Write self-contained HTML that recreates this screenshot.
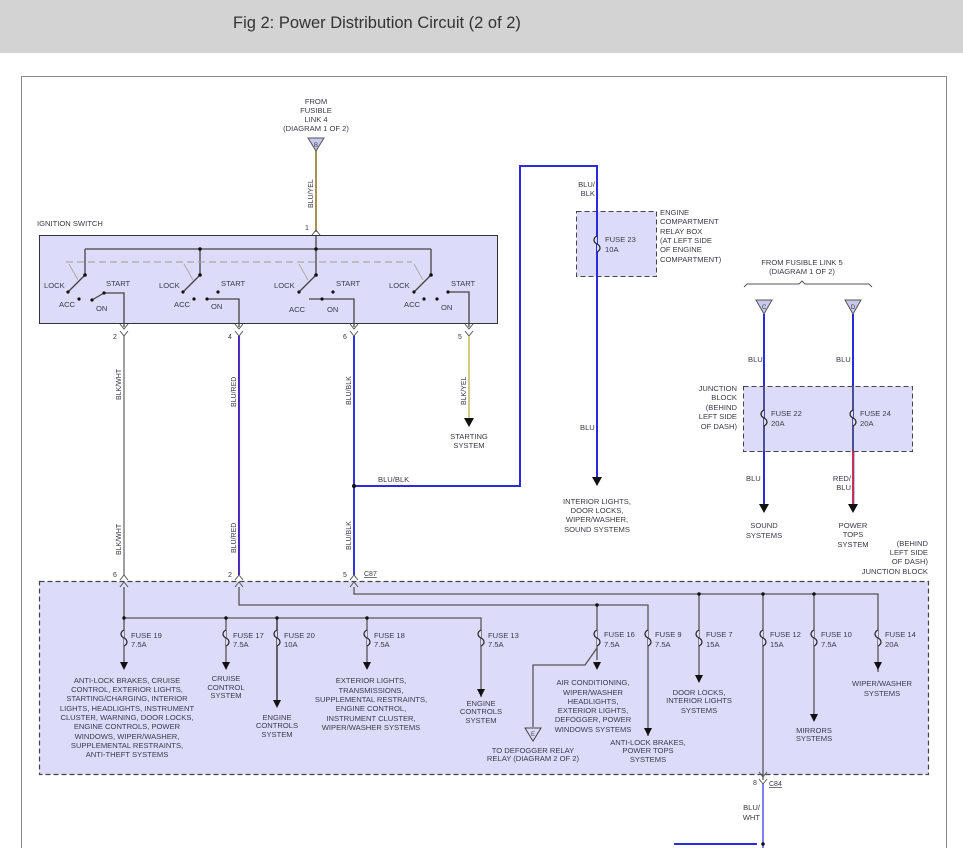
<!DOCTYPE html>
<html><head><meta charset="utf-8"><style>
html,body{margin:0;padding:0;background:#fff;width:963px;height:848px;overflow:hidden}
svg{display:block}
text{font-family:"Liberation Sans",Arial,sans-serif;font-size:7.6px;fill:#3a3a4a}
.c{text-anchor:middle}
.r{text-anchor:end}
</style></head><body>
<svg width="963" height="848" viewBox="0 0 963 848" xmlns="http://www.w3.org/2000/svg">
<rect x="0" y="0" width="963" height="53" fill="#d3d3d3"/>
<text x="233" y="28" style="font-size:16.5px;fill:#333">Fig 2: Power Distribution Circuit (2 of 2)</text>
<rect x="21.5" y="76.5" width="925" height="790" fill="#fff" stroke="#8a8a8a" stroke-width="1"/>

<!-- fills -->
<rect x="39.5" y="235.5" width="458" height="88" fill="#dcdcfa" stroke="#333" stroke-width="1"/>
<rect x="576.5" y="211.5" width="80" height="65" fill="#dcdcfa" stroke="#444" stroke-dasharray="5,3"/>
<rect x="743.5" y="386.5" width="169" height="65" fill="#dcdcfa" stroke="#444" stroke-dasharray="5,3"/>
<rect x="39.5" y="581.5" width="889" height="193" fill="#dcdcfa" stroke="#444" stroke-dasharray="5,3" stroke-width="1.2"/>

<!-- B connector -->
<polygon points="308,138 324,138 316,151" fill="#c8c8ec" stroke="#555"/>
<text x="316" y="147" class="c" style="font-size:6px">B</text>
<line x1="316" y1="151" x2="316" y2="232" stroke="#e8d000" stroke-width="2"/>
<line x1="316" y1="151" x2="316" y2="232" stroke="#2222dd" stroke-width="0.7"/>
<text x="305" y="230" style="font-size:7px">1</text>
<path d="M312 235 L316 230 L320 235" fill="none" stroke="#555"/>
<text x="316" y="104" class="c">FROM</text>
<text x="316" y="113" class="c">FUSIBLE</text>
<text x="316" y="122" class="c">LINK 4</text>
<text x="316" y="131" class="c">(DIAGRAM 1 OF 2)</text>
<text transform="translate(313,208) rotate(-90)" style="font-size:7px">BLU/YEL</text>
<text x="37" y="226">IGNITION SWITCH</text>

<!-- ignition internals -->
<g stroke="#444" stroke-width="1.3" fill="none">
<line x1="316" y1="236" x2="316" y2="275"/>
<line x1="85" y1="249" x2="431" y2="249"/>
<line x1="85" y1="249" x2="85" y2="275"/>
<line x1="200" y1="249" x2="200" y2="275"/>
<line x1="431" y1="249" x2="431" y2="275"/>
<line x1="85" y1="275" x2="68" y2="292"/>
<line x1="200" y1="275" x2="183" y2="292"/>
<line x1="316" y1="275" x2="299" y2="292"/>
<line x1="431" y1="275" x2="414" y2="292"/>
<path d="M92 300 L104 293 L124 293 L124 327"/>
<path d="M207 299 L239 299 L239 327"/>
<path d="M309 299 L322 299 L354 299 L354 327"/>
<path d="M448 292 L469 292 L469 327"/>
</g>
<g stroke="#aaa" stroke-width="1" fill="none">
<line x1="66" y1="262" x2="412" y2="262" stroke-dasharray="7,4" stroke-width="1.3"/>
<line x1="69" y1="264" x2="78" y2="280"/>
<line x1="184" y1="264" x2="193" y2="280"/>
<line x1="299" y1="264" x2="308" y2="280"/>
<line x1="414" y1="264" x2="423" y2="280"/>
</g>
<g fill="#111">
<circle cx="200" cy="249" r="1.8"/><circle cx="316" cy="249" r="1.8"/>
<circle cx="85" cy="275" r="1.8"/><circle cx="200" cy="275" r="1.8"/><circle cx="316" cy="275" r="1.8"/><circle cx="431" cy="275" r="1.8"/>
<circle cx="68" cy="292" r="1.6"/><circle cx="79" cy="299" r="1.6"/><circle cx="92" cy="300" r="1.6"/><circle cx="104" cy="293" r="1.6"/>
<circle cx="183" cy="292" r="1.6"/><circle cx="194" cy="299" r="1.6"/><circle cx="207" cy="299" r="1.6"/><circle cx="218" cy="292" r="1.6"/>
<circle cx="299" cy="292" r="1.6"/><circle cx="322" cy="299" r="1.6"/><circle cx="333" cy="292" r="1.6"/>
<circle cx="414" cy="292" r="1.6"/><circle cx="424" cy="299" r="1.6"/><circle cx="437" cy="299" r="1.6"/><circle cx="448" cy="292" r="1.6"/>
</g>
<text x="44" y="288">LOCK</text><text x="59" y="307">ACC</text><text x="106" y="286">START</text><text x="96" y="311">ON</text>
<text x="159" y="288">LOCK</text><text x="174" y="307">ACC</text><text x="221" y="286">START</text><text x="211" y="309">ON</text>
<text x="274" y="288">LOCK</text><text x="289" y="312">ACC</text><text x="336" y="286">START</text><text x="327" y="312">ON</text>
<text x="389" y="288">LOCK</text><text x="404" y="307">ACC</text><text x="451" y="286">START</text><text x="441" y="310">ON</text>

<!-- ignition outputs -->
<g fill="none" stroke="#555">
<path d="M120 324 L124 329 L128 324"/><path d="M235 324 L239 329 L243 324"/><path d="M350 324 L354 329 L358 324"/><path d="M465 324 L469 329 L473 324"/>
<path d="M120 331 L124 336 L128 331"/><path d="M235 331 L239 336 L243 331"/><path d="M350 331 L354 336 L358 331"/><path d="M465 331 L469 336 L473 331"/>
</g>
<text x="113" y="339" style="font-size:7px">2</text><text x="228" y="339" style="font-size:7px">4</text><text x="343" y="339" style="font-size:7px">6</text><text x="458" y="339" style="font-size:7px">5</text>
<line x1="124" y1="336" x2="124" y2="575" stroke="#888" stroke-width="1.6"/>
<line x1="239" y1="336" x2="239" y2="575" stroke="#2a2ad8" stroke-width="2"/>
<line x1="239.8" y1="336" x2="239.8" y2="575" stroke="#c03050" stroke-width="0.5"/>
<line x1="354" y1="336" x2="354" y2="575" stroke="#3333dd" stroke-width="2"/>
<line x1="469" y1="336" x2="469" y2="418" stroke="#c8c060" stroke-width="1.6"/>
<polygon points="464,418 474,418 469,427" fill="#111"/>
<text x="469" y="439" class="c">STARTING</text><text x="469" y="448" class="c">SYSTEM</text>
<text transform="translate(121,400) rotate(-90)" style="font-size:7px">BLK/WHT</text>
<text transform="translate(236,407) rotate(-90)" style="font-size:7px">BLU/RED</text>
<text transform="translate(351,405) rotate(-90)" style="font-size:7px">BLU/BLK</text>
<text transform="translate(466,405) rotate(-90)" style="font-size:7px">BLK/YEL</text>
<text transform="translate(121,555) rotate(-90)" style="font-size:7px">BLK/WHT</text>
<text transform="translate(236,553) rotate(-90)" style="font-size:7px">BLU/RED</text>
<text transform="translate(351,550) rotate(-90)" style="font-size:7px">BLU/BLK</text>

<!-- BLU/BLK loop -->
<path d="M354 486 L520 486 L520 166 L597 166 L597 477" fill="none" stroke="#2a2ae0" stroke-width="2"/>
<circle cx="354" cy="486" r="2" fill="#111"/>
<rect x="350" y="478" width="3" height="3" fill="#fff"/>
<text x="378" y="482">BLU/BLK</text>
<polygon points="592,477 602,477 597,486" fill="#111"/>
<text x="595" y="187" class="r">BLU/</text><text x="595" y="196" class="r">BLK</text>
<text x="580" y="430">BLU</text>
<path d="M597 236 c-4 2 -4 6 0 8 c4 2 4 6 0 8" fill="#dcdcfa" stroke="#222" stroke-width="1.2"/>
<text x="605" y="242">FUSE 23</text><text x="605" y="252">10A</text>
<text x="660" y="215">ENGINE</text><text x="660" y="224">COMPARTMENT</text><text x="660" y="234">RELAY BOX</text>
<text x="660" y="243">(AT LEFT SIDE</text><text x="660" y="252">OF ENGINE</text><text x="660" y="262">COMPARTMENT)</text>
<text x="597" y="504" class="c">INTERIOR LIGHTS,</text><text x="597" y="513" class="c">DOOR LOCKS,</text>
<text x="597" y="522" class="c">WIPER/WASHER,</text><text x="597" y="532" class="c">SOUND SYSTEMS</text>

<!-- C/D -->
<text x="802" y="265" class="c">FROM FUSIBLE LINK 5</text><text x="802" y="274" class="c">(DIAGRAM 1 OF 2)</text>
<path d="M744 287 L747 284 L799 284 L802 281 L805 284 L869 284 L872 287" fill="none" stroke="#555"/>
<polygon points="756,300 772,300 764,314" fill="#c8c8ec" stroke="#555"/>
<polygon points="845,300 861,300 853,314" fill="#c8c8ec" stroke="#555"/>
<text x="764" y="309" class="c" style="font-size:6px">C</text><text x="853" y="309" class="c" style="font-size:6px">D</text>
<line x1="764" y1="314" x2="764" y2="504" stroke="#2a2ae0" stroke-width="2"/>
<line x1="853" y1="314" x2="853" y2="451" stroke="#2a2ae0" stroke-width="2"/>
<line x1="853" y1="451" x2="853" y2="504" stroke="#e03040" stroke-width="2"/>
<line x1="854" y1="451" x2="854" y2="504" stroke="#3333dd" stroke-width="0.6"/>
<line x1="764" y1="386" x2="764" y2="451" stroke="#666" stroke-width="1.2"/>
<line x1="853" y1="386" x2="853" y2="451" stroke="#666" stroke-width="1.2"/>
<path d="M764 410 c-4 2 -4 6 0 8 c4 2 4 6 0 8" fill="#dcdcfa" stroke="#222" stroke-width="1.2"/>
<path d="M853 410 c-4 2 -4 6 0 8 c4 2 4 6 0 8" fill="#dcdcfa" stroke="#222" stroke-width="1.2"/>
<text x="771" y="416">FUSE 22</text><text x="771" y="426">20A</text>
<text x="860" y="416">FUSE 24</text><text x="860" y="426">20A</text>
<polygon points="759,504 769,504 764,513" fill="#111"/>
<polygon points="848,504 858,504 853,513" fill="#111"/>
<text x="748" y="362">BLU</text><text x="836" y="362">BLU</text>
<text x="737" y="391" class="r">JUNCTION</text><text x="737" y="400" class="r">BLOCK</text><text x="737" y="410" class="r">(BEHIND</text>
<text x="737" y="419" class="r">LEFT SIDE</text><text x="737" y="429" class="r">OF DASH)</text>
<text x="746" y="481">BLU</text><text x="851" y="481" class="r">RED/</text><text x="851" y="490" class="r">BLU</text>
<text x="764" y="528" class="c">SOUND</text><text x="764" y="538" class="c">SYSTEMS</text>
<text x="853" y="528" class="c">POWER</text><text x="853" y="537" class="c">TOPS</text><text x="853" y="547" class="c">SYSTEM</text>
<text x="928" y="546" class="r">(BEHIND</text><text x="928" y="555" class="r">LEFT SIDE</text><text x="928" y="564" class="r">OF DASH)</text><text x="928" y="574" class="r">JUNCTION BLOCK</text>

<!-- junction block connectors -->
<g fill="none" stroke="#555">
<path d="M120 580 L124 575 L128 580"/><path d="M235 580 L239 575 L243 580"/><path d="M350 580 L354 575 L358 580"/>
<path d="M120 587 L124 582 L128 587"/><path d="M235 587 L239 582 L243 587"/><path d="M350 587 L354 582 L358 587"/>
</g>
<text x="113" y="577" style="font-size:7px">6</text><text x="228" y="577" style="font-size:7px">2</text><text x="343" y="577" style="font-size:7px">5</text>
<text x="364" y="576" style="font-size:7px;text-decoration:underline">C87</text>

<g fill="none" stroke="#555" stroke-width="1.3">
<path d="M124 587 L124 618 L481 618 L481 697"/>
<path d="M239 587 L239 605 L648 605 L648 736"/>
<path d="M354 587 L354 594 L878 594 L878 672"/>
<line x1="124" y1="618" x2="124" y2="662"/>
<line x1="226" y1="618" x2="226" y2="662"/>
<line x1="367" y1="618" x2="367" y2="662"/>
<line x1="597" y1="605" x2="597" y2="660"/>
<line x1="699" y1="594" x2="699" y2="675"/>
<line x1="814" y1="594" x2="814" y2="714"/>
<line x1="763" y1="594" x2="763" y2="780"/>
<path d="M597 648 L585 665 L533 665 L533 727"/>
</g>
<line x1="277" y1="618" x2="277" y2="700" stroke="#222" stroke-width="1.3"/>
<g fill="#111">
<circle cx="124" cy="618" r="1.7"/><circle cx="226" cy="618" r="1.7"/><circle cx="277" cy="618" r="1.7"/><circle cx="367" cy="618" r="1.7"/>
<circle cx="597" cy="605" r="1.7"/><circle cx="699" cy="594" r="1.7"/><circle cx="763" cy="594" r="1.7"/><circle cx="814" cy="594" r="1.7"/>
<polygon points="120,662 128,662 124,670"/><polygon points="222,662 230,662 226,670"/><polygon points="273,700 281,700 277,708"/>
<polygon points="363,662 371,662 367,670"/><polygon points="477,689 485,689 481,697"/><polygon points="593,662 601,662 597,670"/>
<polygon points="644,728 652,728 648,736"/><polygon points="695,675 703,675 699,683"/><polygon points="810,714 818,714 814,722"/>
<polygon points="874,662 882,662 878,670"/>
</g>
<g fill="#dcdcfa" stroke="#222" stroke-width="1.2">
<path d="M124 630 c-4 2 -4 6 0 8 c4 2 4 6 0 8"/>
<path d="M226 630 c-4 2 -4 6 0 8 c4 2 4 6 0 8"/>
<path d="M277 630 c-4 2 -4 6 0 8 c4 2 4 6 0 8"/>
<path d="M367 630 c-4 2 -4 6 0 8 c4 2 4 6 0 8"/>
<path d="M481 630 c-4 2 -4 6 0 8 c4 2 4 6 0 8"/>
<path d="M597 630 c-4 2 -4 6 0 8 c4 2 4 6 0 8"/>
<path d="M648 630 c-4 2 -4 6 0 8 c4 2 4 6 0 8"/>
<path d="M699 630 c-4 2 -4 6 0 8 c4 2 4 6 0 8"/>
<path d="M763 630 c-4 2 -4 6 0 8 c4 2 4 6 0 8"/>
<path d="M814 630 c-4 2 -4 6 0 8 c4 2 4 6 0 8"/>
<path d="M878 630 c-4 2 -4 6 0 8 c4 2 4 6 0 8"/>
</g>
<text x="131" y="638">FUSE 19</text><text x="131" y="647">7.5A</text>
<text x="233" y="638">FUSE 17</text><text x="233" y="647">7.5A</text>
<text x="284" y="638">FUSE 20</text><text x="284" y="647">10A</text>
<text x="374" y="638">FUSE 18</text><text x="374" y="647">7.5A</text>
<text x="488" y="638">FUSE 13</text><text x="488" y="647">7.5A</text>
<text x="604" y="637">FUSE 16</text><text x="604" y="647">7.5A</text>
<text x="655" y="637">FUSE 9</text><text x="655" y="647">7.5A</text>
<text x="706" y="637">FUSE 7</text><text x="706" y="647">15A</text>
<text x="770" y="637">FUSE 12</text><text x="770" y="647">15A</text>
<text x="821" y="637">FUSE 10</text><text x="821" y="647">7.5A</text>
<text x="885" y="637">FUSE 14</text><text x="885" y="647">20A</text>

<g class="c">
<text x="127" y="683" class="c">ANTI-LOCK BRAKES, CRUISE</text>
<text x="127" y="692" class="c">CONTROL, EXTERIOR LIGHTS,</text>
<text x="127" y="701" class="c">STARTING/CHARGING, INTERIOR</text>
<text x="127" y="711" class="c">LIGHTS, HEADLIGHTS, INSTRUMENT</text>
<text x="127" y="720" class="c">CLUSTER, WARNING, DOOR LOCKS,</text>
<text x="127" y="729" class="c">ENGINE CONTROLS, POWER</text>
<text x="127" y="739" class="c">WINDOWS, WIPER/WASHER,</text>
<text x="127" y="748" class="c">SUPPLEMENTAL RESTRAINTS,</text>
<text x="127" y="757" class="c">ANTI-THEFT SYSTEMS</text>
<text x="226" y="681" class="c">CRUISE</text><text x="226" y="690" class="c">CONTROL</text><text x="226" y="698" class="c">SYSTEM</text>
<text x="277" y="720" class="c">ENGINE</text><text x="277" y="728" class="c">CONTROLS</text><text x="277" y="737" class="c">SYSTEM</text>
<text x="371" y="683" class="c">EXTERIOR LIGHTS,</text><text x="371" y="693" class="c">TRANSMISSIONS,</text>
<text x="371" y="702" class="c">SUPPLEMENTAL RESTRAINTS,</text><text x="371" y="711" class="c">ENGINE CONTROL,</text>
<text x="371" y="721" class="c">INSTRUMENT CLUSTER,</text><text x="371" y="730" class="c">WIPER/WASHER SYSTEMS</text>
<text x="481" y="706" class="c">ENGINE</text><text x="481" y="714" class="c">CONTROLS</text><text x="481" y="723" class="c">SYSTEM</text>
<text x="593" y="685" class="c">AIR CONDITIONING,</text><text x="593" y="695" class="c">WIPER/WASHER</text>
<text x="593" y="704" class="c">HEADLIGHTS,</text><text x="593" y="713" class="c">EXTERIOR LIGHTS,</text>
<text x="593" y="722" class="c">DEFOGGER, POWER</text><text x="593" y="732" class="c">WINDOWS SYSTEMS</text>
<text x="648" y="745" class="c">ANTI-LOCK BRAKES,</text><text x="648" y="753" class="c">POWER TOPS</text><text x="648" y="762" class="c">SYSTEMS</text>
<text x="533" y="753" class="c">TO DEFOGGER RELAY</text><text x="533" y="761" class="c">RELAY (DIAGRAM 2 OF 2)</text>
<text x="699" y="695" class="c">DOOR LOCKS,</text><text x="699" y="703" class="c">INTERIOR LIGHTS</text><text x="699" y="713" class="c">SYSTEMS</text>
<text x="814" y="733" class="c">MIRRORS</text><text x="814" y="741" class="c">SYSTEMS</text>
<text x="882" y="686" class="c">WIPER/WASHER</text><text x="882" y="696" class="c">SYSTEMS</text>
</g>
<polygon points="525,728 541,728 533,741" fill="#dcdcfa" stroke="#444"/>
<text x="533" y="736" class="c" style="font-size:6px">E</text>

<!-- C84 -->
<path d="M759 772 L763 777 L767 772" fill="none" stroke="#555"/>
<path d="M759 779 L763 784 L767 779" fill="none" stroke="#555"/>
<text x="753" y="785" style="font-size:7px">8</text>
<text x="769" y="786" style="font-size:7px;text-decoration:underline">C84</text>
<line x1="763" y1="784" x2="763" y2="848" stroke="#5555ee" stroke-width="1.5"/>
<text x="760" y="810" class="r">BLU/</text><text x="760" y="820" class="r">WHT</text>
<line x1="674" y1="844" x2="757" y2="844" stroke="#2a2ae0" stroke-width="2"/>
<circle cx="763" cy="844" r="1.8" fill="#111"/>
</svg>
</body></html>
